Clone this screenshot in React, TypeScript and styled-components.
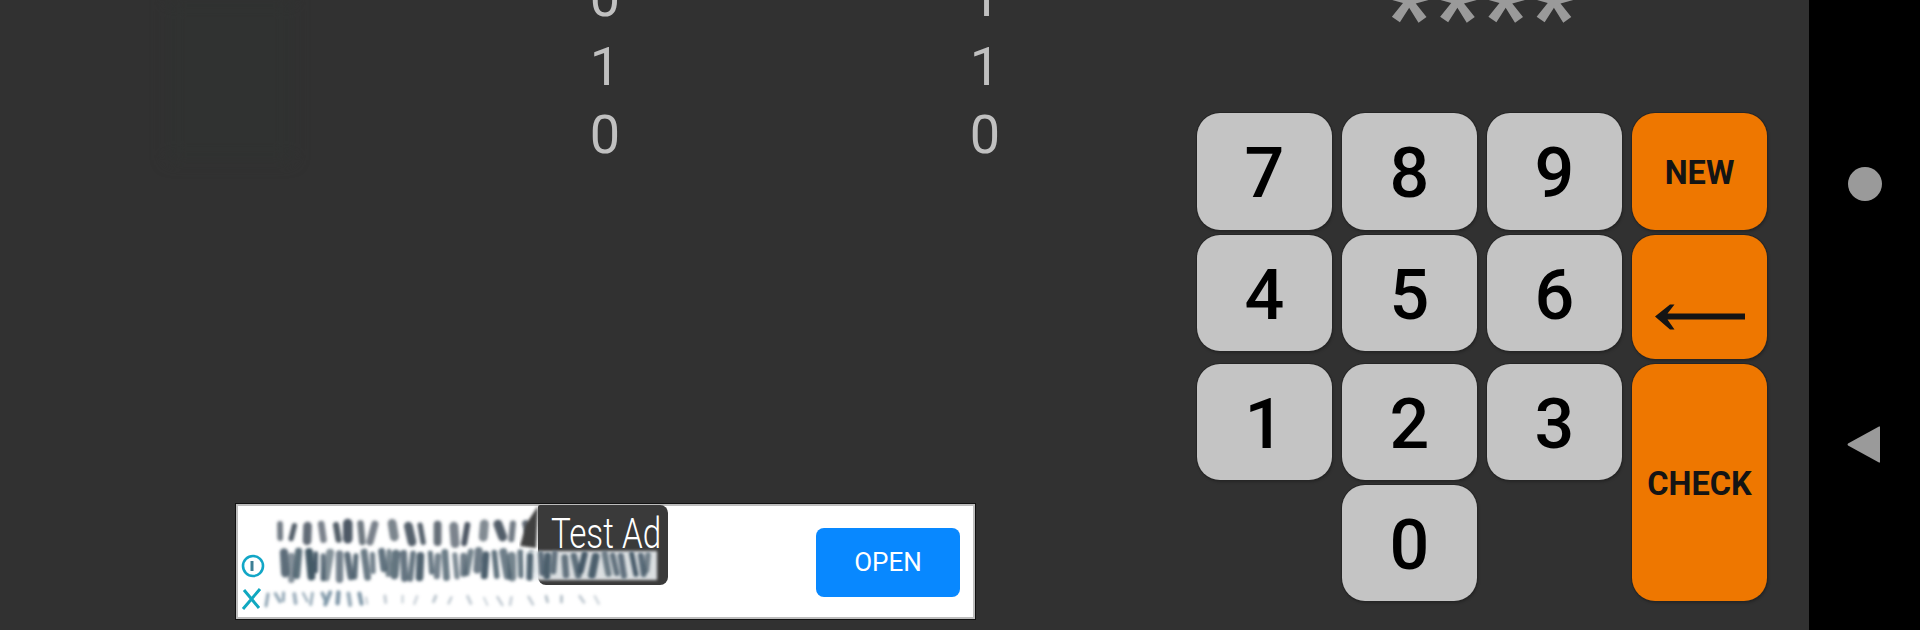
import React from "react";
import styled, { createGlobalStyle } from "styled-components";

const GlobalStyle = createGlobalStyle`
  html, body {
    margin: 0;
    padding: 0;
    background: #000;
  }
  body {
    font-family: Roboto, "Liberation Sans", sans-serif;
  }
`;

const Screen = styled.div`
  display: flex;
  width: 1920px;
  height: 630px;
  overflow: hidden;
`;

const Game = styled.div`
  position: relative;
  display: flex;
  flex: 1;
  background: #313131;
`;

const LeftPane = styled.div`
  display: flex;
  flex-direction: column;
  width: 1000px;
`;

const ResultList = styled.div`
  display: grid;
  grid-template-columns: 380px 380px;
  grid-auto-rows: 68.5px;
  margin: -36px 0 0 415px;
`;

const ResultDigit = styled.div`
  font-size: 54px;
  font-weight: 380;
  line-height: 68.5px;
  text-align: center;
  color: #c0c0c0;
`;

const Banner = styled.div`
  position: relative;
  display: flex;
  align-items: center;
  box-sizing: border-box;
  width: 741px;
  height: 117px;
  margin: auto 0 10px 235px;
  background: #fff;
  border: 1px solid #111;
  box-shadow: inset 0 0 0 2px #bdbdbd;
`;

const BannerArt = styled.svg`
  position: absolute;
  left: 0;
  top: 0;
`;

const TestBadge = styled.div`
  position: absolute;
  left: 302px;
  top: 1px;
  box-sizing: border-box;
  width: 130px;
  height: 80px;
  padding: 6px 0 0 0;
  background: #3a3a3a;
  border-radius: 2px 8px 8px 8px;
  color: #fff;
  font-size: 42px;
  font-weight: 300;
  line-height: 46px;
  white-space: nowrap;
`;

const BadgeText = styled.span`
  display: block;
  transform: translateX(13px) scaleX(0.79);
  transform-origin: left center;
`;

const OpenButton = styled.div`
  display: flex;
  align-items: center;
  justify-content: center;
  width: 144px;
  height: 69px;
  margin: 1px 15px 0 auto;
  background: #0888ff;
  border-radius: 8px;
  color: #fff;
  font-size: 26px;
  font-weight: 400;
`;

const RightPane = styled.div`
  display: flex;
  flex-direction: column;
  padding-left: 197px;
`;

const Stars = styled.div`
  display: flex;
  justify-content: center;
  width: 570px;
  height: 148.5px;
  margin-top: -35.5px;
  color: #9a9a9a;
  font-size: 104px;
  font-weight: 700;
  line-height: 104px;
  letter-spacing: 1px;
`;

const Keypad = styled.div`
  display: grid;
  grid-template-columns: repeat(4, 135px);
  grid-template-rows: 117px 124px 116px 116px;
  column-gap: 10px;
  row-gap: 5px;
`;

const Key = styled.div<{ $accent?: boolean; $col: number; $row: number; $span?: number; $short?: boolean }>`
  display: flex;
  align-items: center;
  justify-content: center;
  grid-column: ${(p) => p.$col};
  grid-row: ${(p) => p.$row} / span ${(p) => p.$span ?? 1};
  height: ${(p) => (p.$short ? "116px" : "auto")};
  padding-top: 3px;
  box-sizing: border-box;
  background: ${(p) => (p.$accent ? "#ee7700" : "#c4c4c4")};
  border-radius: 23px;
  box-shadow: 0 0 0 1px #262626, 1px 2px 3px rgba(0, 0, 0, 0.25);
  color: ${(p) => (p.$accent ? "#141414" : "#000")};
  font-size: ${(p) => (p.$accent ? "32.5px" : "70px")};
  font-weight: ${(p) => (p.$accent ? 700 : 480)};
  line-height: 1;
`;

const BackArrow = styled.svg`
  margin-top: 37px;
`;

const NavBar = styled.div`
  display: flex;
  flex-direction: column;
  align-items: center;
  width: 111px;
  padding-top: 167px;
  background: #000;
`;

const NavCircle = styled.div`
  width: 34px;
  height: 34px;
  border-radius: 50%;
  background: #9a9a9a;
`;

const NavBack = styled.svg`
  margin: 225px 3px 0 0;
`;

const GhostMark = styled.div`
  position: absolute;
  left: 168px;
  top: 0;
  width: 124px;
  height: 160px;
  background: #303231;
  filter: blur(8px);
`;

// fake random but stable from render to render
const rnd = (n: number) => {
  const v = Math.sin(n * 12.9898) * 43758.5453;
  return v - Math.floor(v);
};

type Smear = { x: number; y: number; h: number; w: number; lean: number; o: number };

const smearRow = (from: number, to: number, y: number, h: number, step: number, w: number, seed: number) => {
  const out: Smear[] = [];
  for (let x = from, i = seed; x < to; x += step * (0.75 + rnd(i) * 0.5), i++) {
    out.push({
      x,
      y: y + rnd(i + 40) * h * 0.2,
      h: h * (0.65 + rnd(i + 80) * 0.35),
      w: w * (0.7 + rnd(i + 120) * 0.6),
      lean: (rnd(i + 160) - 0.5) * 10,
      o: 0.65 + rnd(i + 200) * 0.35,
    });
  }
  return out;
};

const topRow = smearRow(44, 296, 19, 19, 14, 7.5, 3);
const midRow = smearRow(48, 300, 47, 26, 9, 6.5, 60);
const midRowRight = smearRow(294, 420, 49, 23, 9, 6.5, 150);
const lowRow = smearRow(32, 130, 88, 12, 9, 3.5, 300);
const lowRowFaint = smearRow(130, 370, 92, 8, 16, 2.5, 340);

const Smears = ({ rows, color }: { rows: Smear[]; color: string }) => (
  <g stroke={color} strokeLinecap="round" fill="none">
    {rows.map((s, i) => (
      <line
        key={i}
        x1={s.x}
        y1={s.y}
        x2={s.x + s.lean}
        y2={s.y + s.h}
        strokeWidth={s.w}
        opacity={s.o}
      />
    ))}
  </g>
);

const digitKeys = [
  { label: "7", col: 1, row: 1 },
  { label: "8", col: 2, row: 1 },
  { label: "9", col: 3, row: 1 },
  { label: "4", col: 1, row: 2, short: true },
  { label: "5", col: 2, row: 2, short: true },
  { label: "6", col: 3, row: 2, short: true },
  { label: "1", col: 1, row: 3 },
  { label: "2", col: 2, row: 3 },
  { label: "3", col: 3, row: 3 },
  { label: "0", col: 2, row: 4 },
];

const results = ["0", "1", "1", "1", "0", "0"];

const App = () => {
  return (
    <Screen>
      <GlobalStyle />
      <Game>
        <GhostMark />
        <LeftPane>
          <ResultList>
            {results.map((d, i) => (
              <ResultDigit key={i}>{d}</ResultDigit>
            ))}
          </ResultList>
          <Banner>
            <BannerArt width="440" height="115" viewBox="0 0 440 115">
              <defs>
                <filter id="adBlur" x="-5%" y="-20%" width="110%" height="140%">
                  <feGaussianBlur stdDeviation="1.5" />
                </filter>
              </defs>
              <g filter="url(#adBlur)">
                <Smears rows={topRow} color="#4c5763" />
                <Smears rows={midRow} color="#445866" />
                <Smears rows={lowRow} color="#7f97a8" />
                <Smears rows={lowRowFaint} color="#b4bfc8" />
              </g>
              <circle cx="17" cy="62" r="10" fill="none" stroke="#12a6c6" strokeWidth="2.6" />
              <path d="M16 57v10" stroke="#3d7f95" strokeWidth="3" />
              <path d="M8 86l15 18M24 85L7 105" stroke="#10a8c0" strokeWidth="3" />
            </BannerArt>
            <TestBadge>
              <BadgeText>Test Ad</BadgeText>
            </TestBadge>
            <BannerArt width="440" height="115" viewBox="0 0 440 115">
              <path
                d="M302 2L290 20L284 42L300 44L302 2Z"
                fill="#3f3f3f"
                filter="url(#adBlur)"
              />
              <rect x="288" y="47" width="133" height="29" fill="#e9edf0" opacity="0.92" filter="url(#adBlur)" />
              <g filter="url(#adBlur)">
                <Smears rows={midRowRight} color="#3f5362" />
              </g>
            </BannerArt>
            <OpenButton>OPEN</OpenButton>
          </Banner>
        </LeftPane>
        <RightPane>
          <Stars>****</Stars>
          <Keypad>
            {digitKeys.map((k) => (
              <Key key={k.label} $col={k.col} $row={k.row} $short={k.short}>
                {k.label}
              </Key>
            ))}
            <Key $accent $col={4} $row={1}>
              NEW
            </Key>
            <Key $accent $col={4} $row={2}>
              <BackArrow width="90" height="26" viewBox="0 0 90 26">
                <path d="M0 12.5L15 0.5H19.5L12.5 9.5H90V15.5H12.5L19.5 25.5H15Z" fill="#141414" />
              </BackArrow>
            </Key>
            <Key $accent $col={4} $row={3} $span={2}>
              CHECK
            </Key>
          </Keypad>
        </RightPane>
      </Game>
      <NavBar>
        <NavCircle />
        <NavBack width="33" height="37" viewBox="0 0 33 37">
          <path d="M33 0.5V36.5H32L1 19.5Q0 18.5 1 17.5L32 0.5Z" fill="#9a9a9a" />
        </NavBack>
      </NavBar>
    </Screen>
  );
};

export default App;
